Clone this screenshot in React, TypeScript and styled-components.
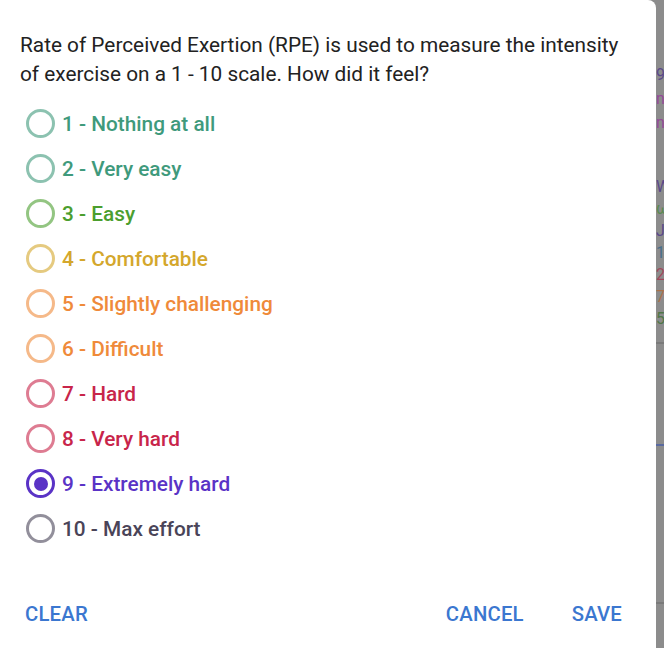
import React, { useState } from 'react';
import styled, { createGlobalStyle } from 'styled-components';

const GlobalStyle = createGlobalStyle`
  html, body {
    margin: 0;
    padding: 0;
    background: #8c8c8c;
  }
  body {
    font-family: Roboto, "Liberation Sans", sans-serif;
  }
`;

const Screen = styled.div`
  display: flex;
  width: 664px;
  height: 648px;
  overflow: hidden;
  background: #8c8c8c;
`;

const Dialog = styled.div`
  width: 656px;
  height: 648px;
  flex-shrink: 0;
  background: #ffffff;
  border-top-right-radius: 8px;
  box-sizing: border-box;
  padding: 31px 0 0 0;
  display: flex;
  flex-direction: column;
`;

const Intro = styled.p`
  margin: 0;
  padding: 0 20px 0 20px;
  font-size: 20.8px;
  line-height: 29px;
  color: #222222;
`;

const OptionList = styled.div`
  display: flex;
  flex-direction: column;
  padding: 12px 0 0 26px;
`;

const OptionRow = styled.label<{ $color: string }>`
  display: flex;
  align-items: center;
  gap: 7px;
  height: 45px;
  cursor: pointer;
  color: ${p => p.$color};
  font-size: 20.8px;
  font-weight: 500;
`;

const RadioRing = styled.span<{ $color: string; $checked: boolean }>`
  width: 29px;
  height: 29px;
  box-sizing: border-box;
  border-radius: 50%;
  border: 3px solid ${p => p.$color};
  opacity: ${p => (p.$checked ? 1 : 0.6)};
  display: flex;
  align-items: center;
  justify-content: center;

  &::after {
    content: '';
    width: 14px;
    height: 14px;
    border-radius: 50%;
    background: ${p => p.$color};
    display: ${p => (p.$checked ? 'block' : 'none')};
  }
`;

const Actions = styled.div`
  margin-top: auto;
  display: flex;
  align-items: center;
  height: 68px;
  padding: 0 34px 0 25px;
`;

const ActionButton = styled.button`
  background: none;
  border: none;
  padding: 0;
  font-family: Roboto, "Liberation Sans", sans-serif;
  font-size: 20.3px;
  font-weight: 500;
  color: #3b77d0;
  cursor: pointer;
  letter-spacing: 0.2px;
`;

const Spacer = styled.div`
  flex: 1;
`;

const ActionGap = styled.div`
  width: 48px;
`;

const Backdrop = styled.div`
  flex: 1;
  display: flex;
  flex-direction: column;
  font-size: 16px;
  line-height: 22px;
  padding-top: 64px;
  overflow: hidden;
`;

const Peek = styled.span<{ $color: string; $gap?: number }>`
  color: ${p => p.$color};
  opacity: 0.6;
  margin-top: ${p => p.$gap ?? 0}px;
  white-space: nowrap;
`;

const Rule = styled.div<{ $color: string; $gap: number }>`
  height: 2px;
  margin-top: ${p => p.$gap}px;
  background: ${p => p.$color};
`;

const options = [
  { value: 1, label: '1 - Nothing at all', color: '#3f9a7c' },
  { value: 2, label: '2 - Very easy', color: '#3f9a7c' },
  { value: 3, label: '3 - Easy', color: '#4b9e2e' },
  { value: 4, label: '4 - Comfortable', color: '#d4a72c' },
  { value: 5, label: '5 - Slightly challenging', color: '#ef8a3a' },
  { value: 6, label: '6 - Difficult', color: '#ef8a3a' },
  { value: 7, label: '7 - Hard', color: '#c8254a' },
  { value: 8, label: '8 - Very hard', color: '#c8254a' },
  { value: 9, label: '9 - Extremely hard', color: '#5a33c6' },
  { value: 10, label: '10 - Max effort', color: '#4a4458' },
];

export default function App() {
  const [selected, setSelected] = useState<number | null>(9);

  return (
    <>
      <GlobalStyle />
      <Screen>
        <Dialog>
          <Intro>
            Rate of Perceived Exertion (RPE) is used to measure the intensity of exercise on a 1 - 10 scale. How did it feel?
          </Intro>
          <OptionList>
            {options.map(o => (
              <OptionRow key={o.value} $color={o.color} onClick={() => setSelected(o.value)}>
                <RadioRing $color={o.color} $checked={selected === o.value} />
                {o.label}
              </OptionRow>
            ))}
          </OptionList>
          <Actions>
            <ActionButton onClick={() => setSelected(null)}>CLEAR</ActionButton>
            <Spacer />
            <ActionButton>CANCEL</ActionButton>
            <ActionGap />
            <ActionButton>SAVE</ActionButton>
          </Actions>
        </Dialog>
        <Backdrop>
          <Peek $color="#3a1a8a">9</Peek>
          <Peek $color="#9a1aa0" $gap={2}>n</Peek>
          <Peek $color="#9a1aa0" $gap={2}>n</Peek>
          <Peek $color="#3a1a8a" $gap={42}>W</Peek>
          <Peek $color="#3a8a2a">ω</Peek>
          <Peek $color="#3a1a8a">J</Peek>
          <Peek $color="#1a5a8a">1</Peek>
          <Peek $color="#b01a3a">2</Peek>
          <Peek $color="#c06020">7</Peek>
          <Peek $color="#2a6a1a">5</Peek>
          <Rule $color="#7a7a7a" $gap={12} />
          <Rule $color="#5a6aa0" $gap={100} />
          <Rule $color="#7a7a7a" $gap={156} />
        </Backdrop>
      </Screen>
    </>
  );
}
